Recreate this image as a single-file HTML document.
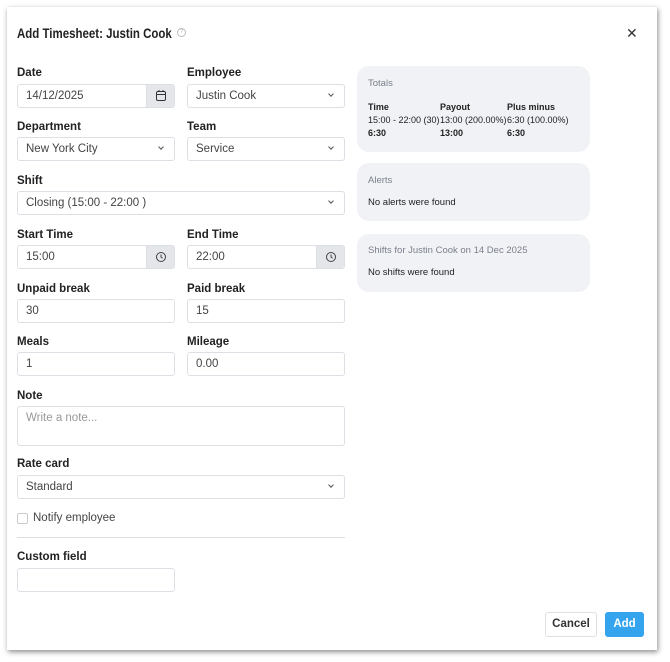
<!DOCTYPE html>
<html><head><style>
*{box-sizing:border-box;margin:0;padding:0}
body{width:670px;height:662px;background:#fff;font-family:"Liberation Sans",sans-serif;font-size:11.5px;color:#222;position:relative;overflow:hidden}
.modal{position:absolute;left:7px;top:7px;width:650px;height:643px;background:#fff;box-shadow:1px 2px 5px rgba(0,0,0,.45)}
.a{position:absolute}
.lbl{position:absolute;font-weight:bold;font-size:11.5px;color:#222;top:0}
.in{position:absolute;height:24px;border:1px solid #dcdfe4;border-radius:3px;background:#fff;padding-left:8px;line-height:22px;color:#444}
.chev{position:absolute;right:11px;top:7px;width:4px;height:4px;border-right:1.2px solid #555;border-bottom:1.2px solid #555;transform:rotate(45deg)}
.addon{position:absolute;right:0;top:0;width:28px;height:22px;background:#e4e6ea;border-left:1px solid #dcdfe4}
.panel{position:absolute;left:357px;width:233px;background:#f1f2f6;border-radius:12px;padding:0 11px}
.ph{color:#7a7f8a;font-size:9.5px}
.pt{font-size:9.5px;color:#222}
.cols .pt{font-size:9px}
</style></head><body>
<div class="modal"></div>
<div class="a" style="left:17px;top:25px;font-size:14px;font-weight:bold;color:#222;transform:scaleX(0.82);transform-origin:0 0;white-space:nowrap">Add Timesheet: Justin Cook</div>
<div class="a" style="left:177px;top:28px;width:9px;height:9px;border:1px solid #bbb;border-radius:50%;font-size:6px;color:#aaa;text-align:center;line-height:7px">?</div>
<div class="a" style="left:626px;top:25px;font-size:14px;color:#333">✕</div>

<div class="lbl" style="left:17px;top:67px">Date</div>
<div class="in" style="left:17px;top:84px;width:158px">14/12/2025<div class="addon"><svg width="28" height="22"><rect x="9.5" y="6.5" width="9" height="9" rx="1.5" fill="none" stroke="#333"/><line x1="9.5" y1="9.5" x2="18.5" y2="9.5" stroke="#333"/><line x1="12" y1="5" x2="12" y2="7" stroke="#333"/><line x1="16" y1="5" x2="16" y2="7" stroke="#333"/></svg></div></div>
<div class="lbl" style="left:187px;top:67px">Employee</div>
<div class="in" style="left:187px;top:84px;width:158px">Justin Cook<div class="chev"></div></div>

<div class="lbl" style="left:17px;top:121px">Department</div>
<div class="in" style="left:17px;top:137px;width:158px">New York City<div class="chev"></div></div>
<div class="lbl" style="left:187px;top:121px">Team</div>
<div class="in" style="left:187px;top:137px;width:158px">Service<div class="chev"></div></div>

<div class="lbl" style="left:17px;top:175px">Shift</div>
<div class="in" style="left:17px;top:191px;width:328px">Closing (15:00 - 22:00 )<div class="chev"></div></div>

<div class="lbl" style="left:17px;top:229px">Start Time</div>
<div class="in" style="left:17px;top:245px;width:158px">15:00<div class="addon"><svg width="28" height="22"><circle cx="14" cy="11" r="4.5" fill="none" stroke="#444"/><path d="M14 8.5V11l1.5 1.2" fill="none" stroke="#444"/></svg></div></div>
<div class="lbl" style="left:187px;top:229px">End Time</div>
<div class="in" style="left:187px;top:245px;width:158px">22:00<div class="addon"><svg width="28" height="22"><circle cx="14" cy="11" r="4.5" fill="none" stroke="#444"/><path d="M14 8.5V11l1.5 1.2" fill="none" stroke="#444"/></svg></div></div>

<div class="lbl" style="left:17px;top:283px">Unpaid break</div>
<div class="in" style="left:17px;top:299px;width:158px">30</div>
<div class="lbl" style="left:187px;top:283px">Paid break</div>
<div class="in" style="left:187px;top:299px;width:158px">15</div>

<div class="lbl" style="left:17px;top:336px">Meals</div>
<div class="in" style="left:17px;top:352px;width:158px">1</div>
<div class="lbl" style="left:187px;top:336px">Mileage</div>
<div class="in" style="left:187px;top:352px;width:158px">0.00</div>

<div class="lbl" style="left:17px;top:390px">Note</div>
<div class="in" style="left:17px;top:406px;width:328px;height:40px;color:#999;line-height:22px">Write a note...</div>

<div class="lbl" style="left:17px;top:458px">Rate card</div>
<div class="in" style="left:17px;top:475px;width:328px">Standard<div class="chev"></div></div>

<div class="a" style="left:17px;top:513px;width:11px;height:11px;border:1px solid #ccc;border-radius:2px"></div>
<div class="a" style="left:33px;top:512px;color:#444">Notify employee</div>
<div class="a" style="left:17px;top:537px;width:328px;height:1px;background:#dcdfe4"></div>

<div class="lbl" style="left:17px;top:551px">Custom field</div>
<div class="in" style="left:17px;top:568px;width:158px"></div>

<div class="panel cols" style="top:66px;height:86px">
 <div class="ph" style="margin-top:12px">Totals</div>
 <div class="a pt" style="left:11px;top:35px;line-height:13px;white-space:nowrap"><b>Time</b><br>15:00 - 22:00 (30)<br><b>6:30</b></div>
 <div class="a pt" style="left:83px;top:35px;line-height:13px;white-space:nowrap"><b>Payout</b><br>13:00 (200.00%)<br><b>13:00</b></div>
 <div class="a pt" style="left:150px;top:35px;line-height:13px;white-space:nowrap"><b>Plus minus</b><br>6:30 (100.00%)<br><b>6:30</b></div>
</div>
<div class="panel" style="top:163px;height:58px">
 <div class="ph" style="margin-top:12px">Alerts</div>
 <div class="pt" style="margin-top:11px">No alerts were found</div>
</div>
<div class="panel" style="top:234px;height:58px">
 <div class="ph" style="margin-top:11px">Shifts for Justin Cook on 14 Dec 2025</div>
 <div class="pt" style="margin-top:11px">No shifts were found</div>
</div>

<div class="a" style="left:545px;top:612px;width:52px;height:25px;border:1px solid #dcdfe4;border-radius:3px;text-align:center;line-height:23px;font-weight:bold;color:#333">Cancel</div>
<div class="a" style="left:605px;top:612px;width:39px;height:25px;background:#35a4ee;border-radius:3px;text-align:center;line-height:25px;font-weight:bold;color:#fff">Add</div>
</body></html>
